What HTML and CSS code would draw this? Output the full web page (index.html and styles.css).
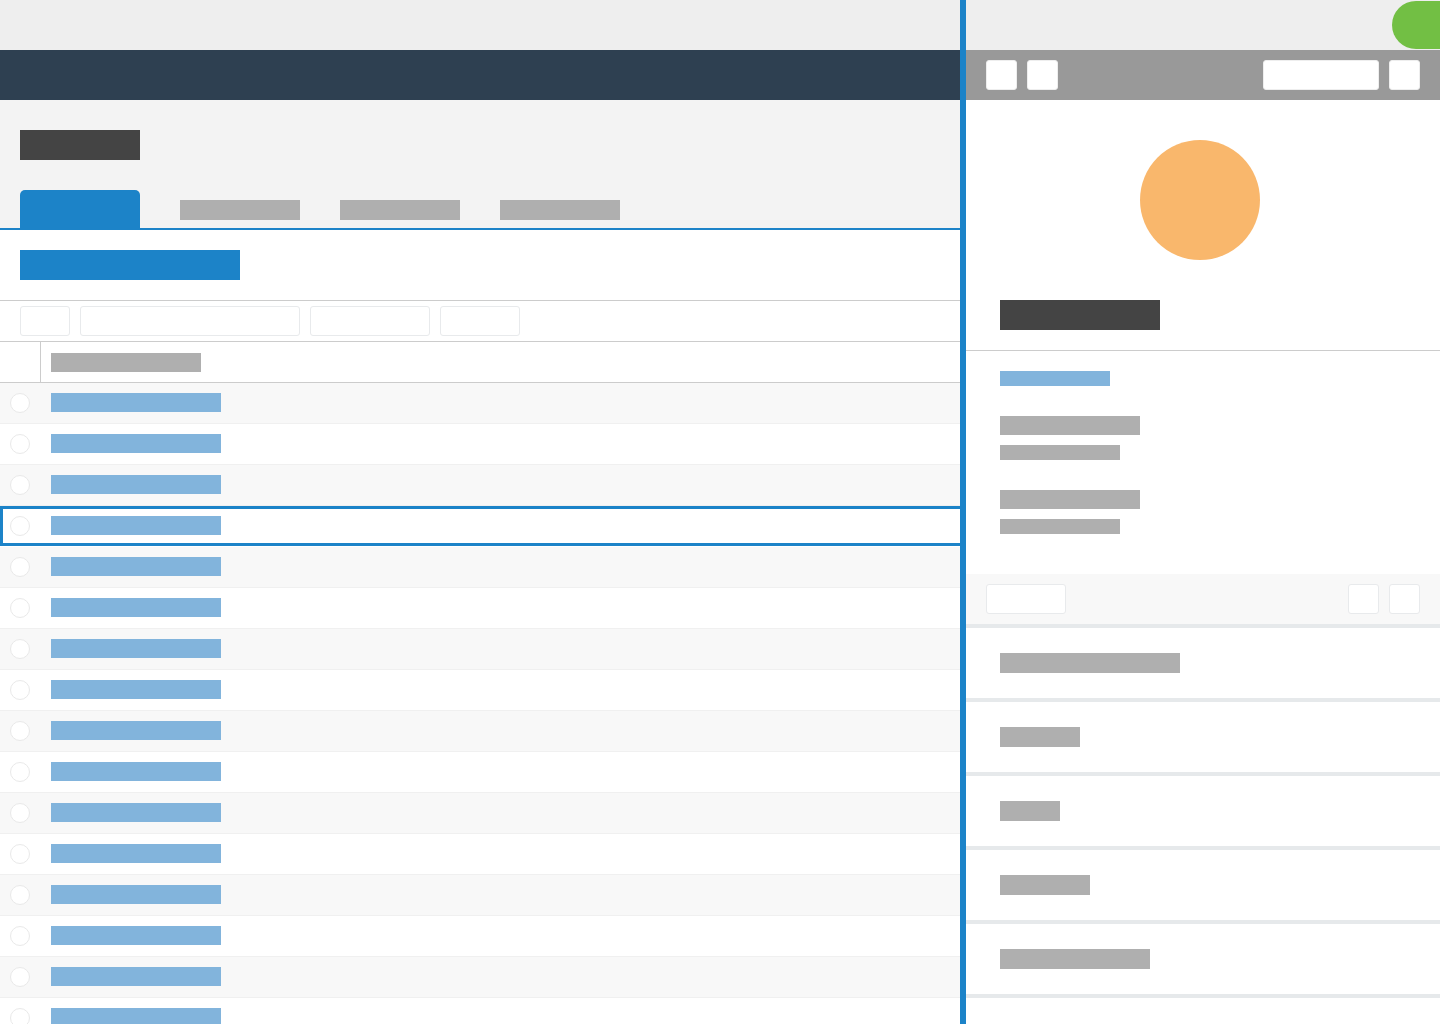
FILE: index.html
```html
<!DOCTYPE html>
<html lang="en">
<head>
<meta charset="utf-8">
<title>Records</title>
<link rel="stylesheet" href="styles.css">
</head>
<body>
<div class="app">
  <main class="main">
    <div class="topbar"></div>
    <div class="nav"></div>
    <header class="head">
      <div class="title"></div>
      <div class="tabs">
        <div class="tab-active"></div>
        <div class="tab w120"></div>
        <div class="tab w120"></div>
        <div class="tab w120"></div>
      </div>
    </header>
    <div class="action"><div class="primary"></div></div>
    <div class="toolbar">
      <div class="btn w50"></div>
      <div class="btn w220"></div>
      <div class="btn w120"></div>
      <div class="btn w80"></div>
    </div>
    <div class="thead">
      <div class="thead-check"></div>
      <div class="thead-label"></div>
    </div>
    <div class="rows">
      <div class="row"><span class="radio"></span><span class="link"></span></div>
      <div class="row"><span class="radio"></span><span class="link"></span></div>
      <div class="row"><span class="radio"></span><span class="link"></span></div>
      <div class="row selected"><span class="radio"></span><span class="link"></span></div>
      <div class="row"><span class="radio"></span><span class="link"></span></div>
      <div class="row"><span class="radio"></span><span class="link"></span></div>
      <div class="row"><span class="radio"></span><span class="link"></span></div>
      <div class="row"><span class="radio"></span><span class="link"></span></div>
      <div class="row"><span class="radio"></span><span class="link"></span></div>
      <div class="row"><span class="radio"></span><span class="link"></span></div>
      <div class="row"><span class="radio"></span><span class="link"></span></div>
      <div class="row"><span class="radio"></span><span class="link"></span></div>
      <div class="row"><span class="radio"></span><span class="link"></span></div>
      <div class="row"><span class="radio"></span><span class="link"></span></div>
      <div class="row"><span class="radio"></span><span class="link"></span></div>
      <div class="row"><span class="radio"></span><span class="link"></span></div>
    </div>
  </main>
  <aside class="side">
    <div class="side-top"><div class="pill"></div></div>
    <div class="side-bar">
      <div class="sq"></div>
      <div class="sq"></div>
      <div class="wide"></div>
      <div class="sq"></div>
    </div>
    <div class="profile">
      <div class="avatar"></div>
      <div class="name"></div>
    </div>
    <div class="details">
      <div class="detail-link"></div>
      <div class="detail-group">
        <div class="line-a"></div>
        <div class="line-b"></div>
      </div>
      <div class="detail-group">
        <div class="line-a"></div>
        <div class="line-b"></div>
      </div>
    </div>
    <div class="side-tools">
      <div class="btn w80"></div>
      <div class="btn w31 push"></div>
      <div class="btn w31"></div>
    </div>
    <div class="item"><div class="item-bar w180"></div></div>
    <div class="item"><div class="item-bar w80b"></div></div>
    <div class="item"><div class="item-bar w60"></div></div>
    <div class="item"><div class="item-bar w90"></div></div>
    <div class="item"><div class="item-bar w150"></div></div>
  </aside>
</div>
</body>
</html>
```
FILE: styles.css
```css
* { box-sizing: border-box; }
html, body { margin: 0; padding: 0; height: 100%; overflow: hidden; background: #fff; font-family: "Liberation Sans", sans-serif; }
.app { display: flex; width: 1440px; height: 1024px; overflow: hidden; }
.main { width: 960px; flex: none; }
.side { width: 480px; flex: none; border-left: 6px solid #1c83c8; }

.topbar { height: 50px; background: #eeeeee; }
.nav { height: 50px; background: #2e4051; }
.head { height: 130px; padding: 30px 20px 0; background: #f3f3f3; border-bottom: 2px solid #1c83c8; }
.title { width: 120px; height: 30px; background: #444444; }
.tabs { display: flex; gap: 40px; margin-top: 30px; }
.tab-active { width: 120px; height: 38px; background: #1c83c8; border-radius: 5px 5px 0 0; }
.tab { height: 20px; margin-top: 10px; background: #afafaf; }
.w120 { width: 120px; }

.action { height: 71px; padding: 20px 20px 0; border-bottom: 1px solid #cccccc; }
.primary { width: 220px; height: 30px; background: #1c83c8; }

.toolbar { display: flex; gap: 10px; height: 41px; padding: 5px 20px 0; border-bottom: 1px solid #cccccc; }
.btn { height: 30px; background: #fff; border: 1px solid #e8eaec; border-radius: 3px; }
.w50 { width: 50px; }
.w220 { width: 220px; }
.w80 { width: 80px; }
.w31 { width: 31px; }
.push { margin-left: auto; }

.thead { display: flex; height: 41px; border-bottom: 1px solid #cccccc; }
.thead-check { width: 41px; border-right: 1px solid #cccccc; }
.thead-label { width: 150px; height: 19px; margin: 11px 0 0 10px; background: #afafaf; }

.row { display: flex; align-items: flex-start; height: 41px; padding: 10px 0 0 10px; background: #fff; border-bottom: 1px solid #f0f0f0; }
.row:nth-child(odd) { background: #f8f8f8; }
.radio { width: 20px; height: 20px; flex: none; background: #fff; border: 1px solid #e9e9e9; border-radius: 50%; }
.link { width: 170px; height: 19px; margin-left: 21px; background: #82b4dc; }
.row.selected { height: 40px; margin-bottom: 1px; padding: 7px 0 0 7px; background: #fff; border: 3px solid #1c83c8; border-right: 0; }

.side-top { display: flex; justify-content: flex-end; height: 50px; padding-top: 1px; background: #eeeeee; }
.pill { width: 48px; height: 48px; background: #72bf44; border-radius: 24px 0 0 24px; }
.side-bar { display: flex; gap: 10px; height: 50px; padding: 10px 20px; background: #999999; }
.sq { width: 31px; height: 30px; background: #fff; border: 1px solid #eeeeee; border-radius: 3px; }
.wide { width: 116px; height: 30px; margin-left: auto; background: #fff; border: 1px solid #eeeeee; border-radius: 3px; }

.profile { height: 251px; padding: 40px 34px 0; border-bottom: 1px solid #cccccc; }
.avatar { width: 120px; height: 120px; margin-left: 140px; background: #f9b76c; border-radius: 50%; }
.name { width: 160px; height: 30px; margin-top: 40px; background: #444444; }

.details { height: 223px; padding: 20px 34px 0; }
.detail-link { width: 110px; height: 15px; background: #82b4dc; }
.detail-group { margin-top: 30px; }
.line-a { width: 140px; height: 19px; background: #afafaf; }
.line-b { width: 120px; height: 15px; margin-top: 10px; background: #afafaf; }

.side-tools { display: flex; gap: 10px; height: 54px; padding: 10px 20px 0; background: #f8f8f8; border-bottom: 4px solid #e6e9eb; }

.item { height: 74px; padding: 25px 34px 0; border-bottom: 4px solid #e6e9eb; }
.item-bar { height: 20px; background: #afafaf; }
.w180 { width: 180px; }
.w80b { width: 80px; }
.w60 { width: 60px; }
.w90 { width: 90px; }
.w150 { width: 150px; }
```
